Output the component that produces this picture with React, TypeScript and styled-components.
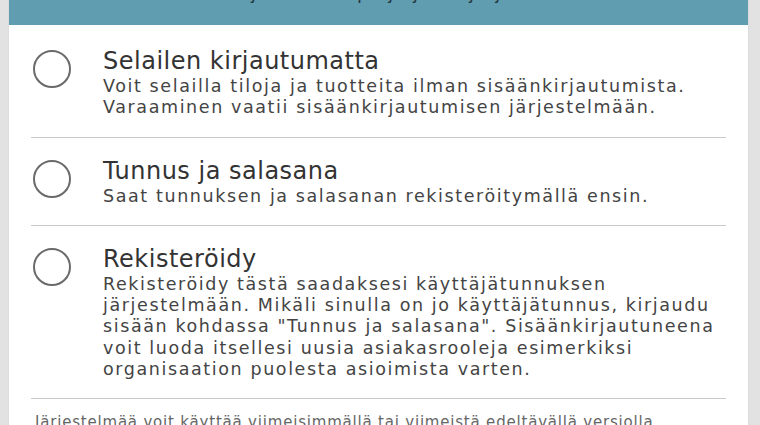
import React from "react";
import styled, { createGlobalStyle } from "styled-components";

const Global = createGlobalStyle`
  html, body { margin: 0; padding: 0; background: #e2e2e2; }
  body { font-family: "DejaVu Sans", "Open Sans", sans-serif; overflow: hidden; }
`;

const Page = styled.div`
  display: flex;
  height: 425px;
  overflow: hidden;
  padding: 0 12px 0 9px;
`;

const Card = styled.div`
  flex: 1;
  background: #ffffff;
  display: flex;
  flex-direction: column;
  box-shadow: 0 0 2px rgba(0, 0, 0, 0.08);
`;

const Header = styled.div`
  background: #619db1;
  height: 60px;
  margin-top: -35px;
  flex: 0 0 auto;
  display: flex;
  align-items: flex-end;
  justify-content: center;
  overflow: hidden;
`;

const HeaderText = styled.div`
  font-family: "DejaVu Sans", sans-serif;
  font-size: 18px;
  line-height: 26px;
  letter-spacing: 1px;
  color: #23383f;
  margin-bottom: 19px;
`;

const Body = styled.div`
  display: flex;
  flex-direction: column;
  padding: 3px 22px 0 22px;
`;

const Option = styled.label`
  display: flex;
  gap: 32px;
  padding: 18px 0 18px 2px;
  border-bottom: 1px solid #c9c9c9;
  cursor: pointer;
`;

const Radio = styled.span`
  flex: 0 0 auto;
  width: 34px;
  height: 34px;
  margin-top: 4px;
  border: 2px solid #6a6a6a;
  border-radius: 50%;
  background: #fff;
`;

const Texts = styled.div`
  display: flex;
  flex-direction: column;
`;

const Title = styled.div`
  font-family: "DejaVu Sans", sans-serif;
  font-size: 24px;
  line-height: 30px;
  letter-spacing: 0.5px;
  color: #333333;
`;

const Desc = styled.div`
  font-family: "DejaVu Sans", sans-serif;
  font-size: 17.5px;
  line-height: 21.3px;
  letter-spacing: 1.6px;
  color: #444444;
  max-width: 622px;
`;

const Footer = styled.div`
  font-family: "DejaVu Sans", sans-serif;
  font-size: 15px;
  line-height: 22px;
  letter-spacing: 0.8px;
  color: #666666;
  padding: 12px 4px;
`;

const options = [
  {
    title: "Selailen kirjautumatta",
    desc: "Voit selailla tiloja ja tuotteita ilman sisäänkirjautumista. Varaaminen vaatii sisäänkirjautumisen järjestelmään.",
  },
  {
    title: "Tunnus ja salasana",
    desc: "Saat tunnuksen ja salasanan rekisteröitymällä ensin.",
  },
  {
    title: "Rekisteröidy",
    desc: 'Rekisteröidy tästä saadaksesi käyttäjätunnuksen järjestelmään. Mikäli sinulla on jo käyttäjätunnus, kirjaudu sisään kohdassa "Tunnus ja salasana". Sisäänkirjautuneena voit luoda itsellesi uusia asiakasrooleja esimerkiksi organisaation puolesta asioimista varten.',
  },
];

export default function App() {
  return (
    <>
      <Global />
      <Page>
        <Card>
          <Header>
            <HeaderText>Valitse kirjautumistapa ja jatka järjestelmään</HeaderText>
          </Header>
          <Body>
            {options.map((o) => (
              <Option key={o.title}>
                <Radio />
                <Texts>
                  <Title>{o.title}</Title>
                  <Desc>{o.desc}</Desc>
                </Texts>
              </Option>
            ))}
            <Footer>
              Järjestelmää voit käyttää viimeisimmällä tai viimeistä edeltävällä versiolla
              seuraavista selaimista.
            </Footer>
          </Body>
        </Card>
      </Page>
    </>
  );
}
